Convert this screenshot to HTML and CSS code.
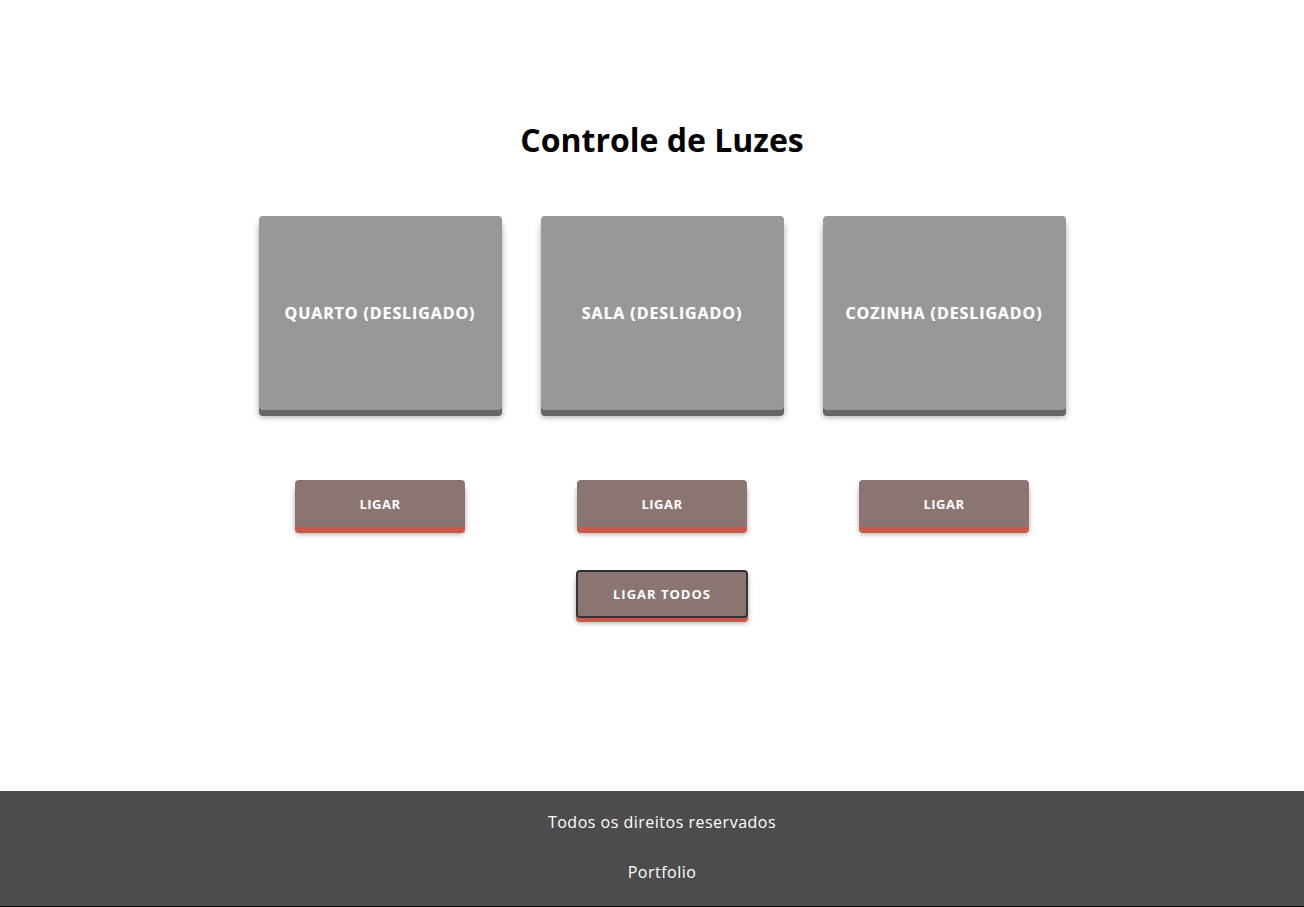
FILE: index.html
```html
<!DOCTYPE html>
<html lang="pt-BR">
<head>
<meta charset="utf-8">
<title>Controle de Luzes</title>
<link rel="stylesheet" href="styles.css">
</head>
<body>
<main class="main">
  <h1 class="title">Controle de Luzes</h1>
  <div class="rooms">
    <div class="room">
      <div class="card"><span class="card-label">QUARTO (DESLIGADO)</span></div>
      <button class="btn">LIGAR</button>
    </div>
    <div class="room">
      <div class="card"><span class="card-label">SALA (DESLIGADO)</span></div>
      <button class="btn">LIGAR</button>
    </div>
    <div class="room">
      <div class="card"><span class="card-label">COZINHA (DESLIGADO)</span></div>
      <button class="btn">LIGAR</button>
    </div>
  </div>
  <button class="btn btn-all">LIGAR TODOS</button>
</main>
<footer class="footer">
  <p class="footer-line">Todos os direitos reservados</p>
  <p class="footer-line">Portfolio</p>
</footer>
</body>
</html>
```
FILE: styles.css
```css
* { box-sizing: border-box; }
html, body { margin: 0; padding: 0; }
body {
  font-family: "Open Sans", "Liberation Sans", sans-serif;
  background: #fff;
  color: #000;
}
.main {
  height: 791px;
  padding: 118px 0 0 20px;
  display: flex;
  flex-direction: column;
  align-items: center;
}
.title {
  margin: 0;
  font-size: 32px;
  font-weight: 700;
  line-height: 44px;
  letter-spacing: 0;
}
.rooms {
  margin-top: 54px;
  display: flex;
  gap: 39px;
}
.room {
  display: flex;
  flex-direction: column;
  align-items: center;
  gap: 70px;
}
.card {
  width: 243px;
  height: 194px;
  background: #989898;
  border-radius: 4px;
  box-shadow: 0 6px 0 #666, 0 7px 6px rgba(0,0,0,0.35);
  display: flex;
  align-items: center;
  justify-content: center;
}
.card-label {
  color: #fff;
  font-weight: 700;
  font-size: 16px;
  letter-spacing: 0.9px;
  text-shadow: 0 0 1px rgba(255,255,255,0.5);
}
.btn {
  width: 170px;
  height: 47px;
  border: none;
  border-radius: 4px;
  background: #8a7573;
  color: #fff;
  font-family: "Open Sans", "Liberation Sans", sans-serif;
  font-weight: 700;
  font-size: 13px;
  letter-spacing: 0.5px;
  box-shadow: 0 6px 0 #c85a4c, 0 7px 5px rgba(0,0,0,0.35);
  cursor: pointer;
}
.btn-all {
  margin-top: 43px;
  width: 172px;
  height: 48px;
  border: 2px solid #333;
  letter-spacing: 1px;
  box-shadow: 0 4px 0 #c85a4c, 0 5px 5px rgba(0,0,0,0.35);
}
.footer {
  height: 116px;
  background: #4c4c4c;
  border-bottom: 1px solid #000;
  padding: 20px 0 0 20px;
  display: flex;
  flex-direction: column;
  align-items: center;
  gap: 28px;
}
.footer-line {
  margin: 0;
  color: #fff;
  font-size: 16px;
  line-height: 22px;
  letter-spacing: 0.5px;
}
```
